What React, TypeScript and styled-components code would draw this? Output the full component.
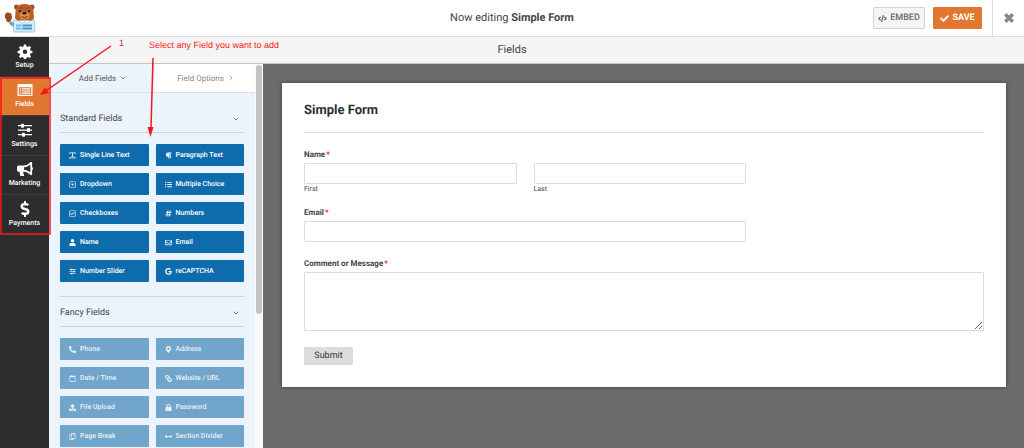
import React from "react";
import styled, { createGlobalStyle, css } from "styled-components";
import {
  FaArrowsAltH,
  FaBullhorn,
  FaCheck,
  FaCode,
  FaDollarSign,
  FaGoogle,
  FaHashtag,
  FaLink,
  FaListUl,
  FaLock,
  FaMapMarkerAlt,
  FaParagraph,
  FaPhoneAlt,
  FaRegCalendar,
  FaRegCaretSquareDown,
  FaRegCheckSquare,
  FaRegCopy,
  FaRegEnvelope,
  FaUpload,
  FaUser,
} from "react-icons/fa";
import { ChevronDown, ChevronRight } from "lucide-react";

const color = {
  orange: "#e27730",
  blue: "#0e6cad",
  panel: "#ebf3fc",
  rail: "#2d2d2d",
  dark: "#6b6b6b",
  text: "#444",
  line: "#c9d4df",
  red: "#f5171b",
};

const GlobalStyle = createGlobalStyle`
  *, *::before, *::after { box-sizing: border-box; }
  body {
    margin: 0;
    font-family: Roboto, "Liberation Sans", sans-serif;
    font-size: 9px;
    color: ${color.text};
    background: ${color.dark};
    text-rendering: geometricPrecision;
  }
  button, input, textarea { font: inherit; color: inherit; margin: 0; text-rendering: inherit; }
  button { cursor: pointer; }
  h1, h2, h3, p { margin: 0; font-weight: 400; }
`;

const Page = styled.div`
  position: relative;
  display: flex;
  flex-direction: column;
  height: 100vh;
  overflow: hidden;
`;

const TopBar = styled.header`
  display: grid;
  grid-template-columns: 1fr auto 1fr;
  align-items: center;
  flex: none;
  height: 37px;
  background: #fff;
  border-bottom: 1px solid #ddd;
`;

const Logo = styled.svg`
  width: 32px;
  height: 29px;
  margin-left: 4px;
`;

const Editing = styled.h1`
  font-size: 11px;
  line-height: 16px;
  strong { font-weight: 700; }
`;

const Actions = styled.div`
  display: flex;
  align-items: center;
  justify-content: flex-end;
  gap: 8px;
  height: 100%;
`;

const ActionButton = styled.button<{ $primary?: boolean }>`
  display: flex;
  align-items: center;
  justify-content: center;
  gap: 3px;
  width: ${(p) => (p.$primary ? 49 : 52)}px;
  height: 22px;
  padding: 0;
  border-radius: 1px;
  border: 1px solid ${(p) => (p.$primary ? color.orange : "#d3d3d3")};
  background: ${(p) => (p.$primary ? color.orange : "#f5f5f5")};
  color: ${(p) => (p.$primary ? "#fff" : "#666")};
  font-weight: ${(p) => (p.$primary ? 700 : 500)};
`;

const CloseButton = styled.button`
  display: grid;
  place-items: center;
  width: 32px;
  height: 100%;
  margin-left: 2px;
  padding: 0;
  border: 0;
  border-left: 1px solid #ddd;
  background: none;
  color: #888;
  font-size: 12px;
`;

const Body = styled.div`
  display: flex;
  flex: 1;
  min-height: 0;
`;

const Rail = styled.nav`
  flex: none;
  width: 49px;
  background: ${color.rail};
`;

const RailList = styled.div`
  display: grid;
  grid-auto-rows: 1fr;
  height: 198px;
`;

const RailItem = styled.button<{ $active?: boolean }>`
  display: flex;
  flex-direction: column;
  align-items: center;
  justify-content: flex-end;
  gap: 1px;
  padding: 0 0 5px;
  border: 0;
  border-bottom: 1px solid #3c3c3c;
  background: ${(p) => (p.$active ? color.orange : "transparent")};
  color: #fff;
  font-size: 7px;
  font-weight: 500;
  line-height: 11px;
  svg { font-size: 16px; }
`;

const Main = styled.main`
  display: flex;
  flex-direction: column;
  flex: 1;
  min-width: 0;
`;

const SectionBar = styled.h2`
  flex: none;
  height: 27px;
  padding-right: 49px;
  border-bottom: 1px solid #c4c4c4;
  background: #f5f5f5;
  font-size: 11px;
  line-height: 26px;
  text-align: center;
`;

const Workspace = styled.div`
  display: flex;
  flex: 1;
  min-height: 0;
`;

const Sidebar = styled.aside`
  flex: none;
  width: 206px;
  overflow: hidden;
  background: ${color.panel};
`;

const ScrollTrack = styled.div`
  flex: none;
  width: 8px;
  padding: 1px 1px 0;
  background: #fafafa;
`;

const ScrollThumb = styled.div`
  height: 249px;
  border-radius: 3px;
  background: #c3c3c3;
`;

const Tabs = styled.div`
  display: grid;
  grid-template-columns: 106px 1fr;
  height: 29px;
`;

const Tab = styled.button<{ $active?: boolean }>`
  display: flex;
  align-items: center;
  justify-content: center;
  gap: 3px;
  padding: 0 0 0 2px;
  border: 0;
  border-bottom: 1px solid ${(p) => (p.$active ? "#dbe4ee" : "#ddd")};
  background: ${(p) => (p.$active ? color.panel : "#fff")};
  color: ${(p) => (p.$active ? "#555" : "#888")};
  font-size: 8px;
`;

const Group = styled.section`
  margin: 0 11px 14px;
  & + & { border-top: 1px solid ${color.line}; }
`;

const GroupHead = styled.h3<{ $tall?: boolean }>`
  display: flex;
  align-items: center;
  justify-content: space-between;
  height: ${(p) => (p.$tall ? 40 : 30)}px;
  padding: ${(p) => (p.$tall ? 12 : 2)}px 4px 0 0;
  border-bottom: 1px solid ${color.line};
  font-size: 9px;
`;

const FieldGrid = styled.div`
  display: grid;
  grid-template-columns: 1fr 1fr;
  gap: 7px;
  padding-top: 11px;
`;

const FieldButton = styled.button<{ $muted?: boolean }>`
  display: flex;
  align-items: center;
  gap: 4px;
  height: 22px;
  padding: 0 9px;
  border: 0;
  border-radius: 1px;
  background: ${(p) => (p.$muted ? "#72a5cc" : color.blue)};
  color: ${(p) => (p.$muted ? "#e6eff7" : "#fff")};
  font-size: 7px;
  font-weight: 500;
  white-space: nowrap;
  svg { flex: none; font-size: 7px; }
`;

const Preview = styled.div`
  flex: 1;
  min-width: 0;
  padding: 19px 18px 0 19px;
  background: ${color.dark};
`;

const FormCard = styled.form`
  padding: 18px 22px 22px;
  background: #fff;
  box-shadow: 0 0 4px rgba(0, 0, 0, 0.4);
`;

const FormTitle = styled.h3`
  height: 32px;
  margin-bottom: 16px;
  border-bottom: 1px solid #ddd;
  color: #2d3034;
  font-size: 13px;
  font-weight: 700;
  line-height: 20px;
`;

const FieldSet = styled.fieldset`
  min-width: 0;
  margin: 0 0 13px;
  padding: 0;
  border: 0;
`;

const Field = styled.div`
  margin-bottom: 16px;
`;

const labelText = css`
  display: block;
  height: 14px;
  padding: 0;
  font-size: 8px;
  font-weight: 700;
  line-height: 12px;
`;

const Legend = styled.legend`${labelText}`;
const Label = styled.label`${labelText}`;

const Star = styled.span`
  margin-left: 1px;
  color: #e0201c;
`;

const Row = styled.div`
  display: grid;
  grid-template-columns: 1fr 1fr;
  gap: 17px;
  width: 65%;
`;

const SubLabel = styled.label`
  display: block;
  font-size: 7px;
  line-height: 10px;
`;

const inputBox = css`
  display: block;
  width: 100%;
  padding: 2px 6px;
  border: 1px solid #ddd;
  border-radius: 1px;
  background: #fff;
`;

const Input = styled.input<{ $medium?: boolean }>`
  ${inputBox}
  width: ${(p) => (p.$medium ? "65%" : "100%")};
  height: 21px;
`;

const TextArea = styled.textarea`
  ${inputBox}
  height: 59px;
`;

const Submit = styled.button`
  display: block;
  width: 49px;
  height: 18px;
  padding: 0;
  border: 1px solid #ddd;
  background: #dcdcdc;
  color: #333;
`;

const Annotations = styled.svg`
  position: absolute;
  top: 0;
  left: 0;
  width: 160px;
  height: 240px;
  pointer-events: none;
`;

const Note = styled.p<{ $left: number; $top: number }>`
  position: absolute;
  left: ${(p) => p.$left}px;
  top: ${(p) => p.$top}px;
  color: ${color.red};
  font-family: "Liberation Sans", Arial, sans-serif;
  line-height: 10px;
  white-space: nowrap;
`;

const Glyph = styled.svg.attrs({ viewBox: "0 0 16 16", fill: "currentColor", "aria-hidden": true })`
  width: 1em;
  height: 1em;
`;

const GearIcon = () => (
  <Glyph>
    <path
      fillRule="evenodd"
      d="M6.900 1.500h2.200l.4 2 1.300.6L12.500 2.900l1.600 1.600-1.200 1.700.5 1.300 2 .4v2.200l-2 .4-.5 1.200 1.200 1.800-1.600 1.500-1.700-1.100-1.300.5-.4 2H6.900l-.4-2-1.300-.5-1.700 1.100-1.600-1.500 1.200-1.800-.5-1.200-2-.4V7.900l2-.4.5-1.300L1.900 4.500l1.600-1.600 1.700 1.200L6.500 3.500zM8 6.600a2.200 2.200 0 1 0 0 4.400 2.200 2.200 0 0 0 0-4.400z"
    />
  </Glyph>
);

const FormIcon = () => (
  <Glyph>
    <path
      fillRule="evenodd"
      d="M1.500 2h13q1 0 1 1v10q0 1-1 1h-13q-1 0-1-1V3q0-1 1-1zm.3 3.300v7.400h12.400V5.300z"
    />
    <path d="M2.800 6.300h1.400v1.200H2.800zM5.200 6.300h8v1.200h-8zM2.800 8.400h1.400v1.200H2.800zM5.200 8.400h8v1.200h-8zM2.800 10.500h1.400v1.200H2.800zM5.200 10.500h8v1.200h-8z" />
  </Glyph>
);

const SlidersIcon = () => (
  <Glyph>
    <path d="M1 3h14v1.300H1zM1 7.500h14v1.300H1zM1 12h14v1.300H1z" />
    <rect x="4" y="1.700" width="3" height="4" rx=".8" />
    <rect x="10" y="6.100" width="3" height="4" rx=".8" />
    <rect x="5" y="10.700" width="3" height="4" rx=".8" />
  </Glyph>
);

const TextWidthIcon = () => (
  <Glyph>
    <path d="M1 1h14v3.500h-1.200L13 2.800H9v7h2V11H5V9.800h2v-7H3l-.8 1.700H1zM0 13.300l2.500-1.800v1.200h11v-1.200l2.500 1.800-2.500 1.900V14h-11v1.200z" />
  </Glyph>
);

const CrossIcon = () => (
  <Glyph>
    <path d="M3 3l10 10M13 3L3 13" stroke="currentColor" strokeWidth="4.600" />
  </Glyph>
);

const ChainIcon = styled(FaLink)`
  transform: scaleX(-1);
`;

const railItems: { label: string; icon: React.ElementType }[] = [
  { label: "Setup", icon: GearIcon },
  { label: "Fields", icon: FormIcon },
  { label: "Settings", icon: SlidersIcon },
  { label: "Marketing", icon: FaBullhorn },
  { label: "Payments", icon: FaDollarSign },
];

const groups: { title: string; muted: boolean; fields: [string, React.ElementType][] }[] = [
  {
    title: "Standard Fields",
    muted: false,
    fields: [
      ["Single Line Text", TextWidthIcon],
      ["Paragraph Text", FaParagraph],
      ["Dropdown", FaRegCaretSquareDown],
      ["Multiple Choice", FaListUl],
      ["Checkboxes", FaRegCheckSquare],
      ["Numbers", FaHashtag],
      ["Name", FaUser],
      ["Email", FaRegEnvelope],
      ["Number Slider", SlidersIcon],
      ["reCAPTCHA", FaGoogle],
    ],
  },
  {
    title: "Fancy Fields",
    muted: true,
    fields: [
      ["Phone", FaPhoneAlt],
      ["Address", FaMapMarkerAlt],
      ["Date / Time", FaRegCalendar],
      ["Website / URL", ChainIcon],
      ["File Upload", FaUpload],
      ["Password", FaLock],
      ["Page Break", FaRegCopy],
      ["Section Divider", FaArrowsAltH],
    ],
  },
];

function BearLogo() {
  return (
    <Logo viewBox="0 0 32 29" aria-label="WPForms" role="img">
      <path d="M9.500 16h20.500l1 10.500q0 1.500-1.500 1.500H11q-1.500 0-1.500-1.500z" fill="#d6ecf7" stroke="#8fc0da" strokeWidth=".8" />
      <circle cx="12.500" cy="3" r="2.500" fill="#a6501f" />
      <circle cx="28" cy="3" r="2.500" fill="#a6501f" />
      <path d="M11.500 8q0-8 9-8t9 8l.5 6q-1.500 3.500-9.500 3.500T11 14z" fill="#b85e26" />
      <path d="M15 4.500q2-2 4 0M22 4.500q2-2 4 0" fill="none" stroke="#8f431c" />
      <ellipse cx="20.500" cy="11.500" rx="5" ry="4" fill="#d98f4e" />
      <ellipse cx="20.500" cy="9.200" rx="2" ry="1.400" fill="#2e1a12" />
      <path d="M17.500 12.500q3 2.500 6 0" fill="none" stroke="#6d3215" />
      <circle cx="16" cy="7" r="1.100" fill="#2e1a12" />
      <circle cx="25" cy="7" r="1.100" fill="#2e1a12" />
      <path d="M15 16.500l3 3 2.500-2 2.500 2 3-3" fill="#fff" stroke="#8fc0da" strokeWidth=".6" />
      <path d="M1 11q0-2 2-2.500 3-.5 4.500 1.500l.5 4q-1 4-4 4.500-2-1-2-3.500-1.500-1-1-4z" fill="#9a4b20" />
      <path d="M6 17l4 2v4l-5-3z" fill="#6aa5c4" />
      <path d="M12 21.500h5.500M12 24.500h5.500" stroke="#6dbbe6" strokeWidth="1.800" />
      <path d="M18.500 21.500h9.500M18.500 24.500h9.500" stroke="#3d97d0" strokeWidth="1.800" />
    </Logo>
  );
}

export default function App() {
  return (
    <>
      <GlobalStyle />
      <Page>
        <TopBar>
          <BearLogo />
          <Editing>
            Now editing <strong>Simple Form</strong>
          </Editing>
          <Actions>
            <ActionButton type="button">
              <FaCode /> EMBED
            </ActionButton>
            <ActionButton type="button" $primary>
              <FaCheck /> SAVE
            </ActionButton>
            <CloseButton type="button" aria-label="Close">
              <CrossIcon />
            </CloseButton>
          </Actions>
        </TopBar>
        <Body>
          <Rail>
            <RailList>
              {railItems.map(({ label, icon: Icon }) => (
                <RailItem key={label} type="button" $active={label === "Fields"}>
                  <Icon />
                  {label}
                </RailItem>
              ))}
            </RailList>
          </Rail>
          <Main>
            <SectionBar>Fields</SectionBar>
            <Workspace>
              <Sidebar>
                <Tabs>
                  <Tab type="button" $active>
                    Add Fields <ChevronDown size={8} />
                  </Tab>
                  <Tab type="button">
                    Field Options <ChevronRight size={8} />
                  </Tab>
                </Tabs>
                {groups.map((group, index) => (
                  <Group key={group.title}>
                    <GroupHead $tall={index === 0}>
                      {group.title} <ChevronDown size={8} />
                    </GroupHead>
                    <FieldGrid>
                      {group.fields.map(([label, Icon]) => (
                        <FieldButton key={label} type="button" $muted={group.muted}>
                          <Icon />
                          {label}
                        </FieldButton>
                      ))}
                    </FieldGrid>
                  </Group>
                ))}
              </Sidebar>
              <ScrollTrack>
                <ScrollThumb />
              </ScrollTrack>
              <Preview>
                <FormCard>
                  <FormTitle>Simple Form</FormTitle>
                  <FieldSet>
                    <Legend>
                      Name<Star>*</Star>
                    </Legend>
                    <Row>
                      <div>
                        <Input id="first" />
                        <SubLabel htmlFor="first">First</SubLabel>
                      </div>
                      <div>
                        <Input id="last" />
                        <SubLabel htmlFor="last">Last</SubLabel>
                      </div>
                    </Row>
                  </FieldSet>
                  <Field>
                    <Label htmlFor="email">
                      Email<Star>*</Star>
                    </Label>
                    <Input id="email" type="email" $medium />
                  </Field>
                  <Field>
                    <Label htmlFor="message">
                      Comment or Message<Star>*</Star>
                    </Label>
                    <TextArea id="message" />
                  </Field>
                  <Submit type="button">Submit</Submit>
                </FormCard>
              </Preview>
            </Workspace>
          </Main>
        </Body>
        <Annotations viewBox="0 0 160 240" aria-hidden="true">
          <g fill="none" stroke={color.red} strokeWidth="1.500">
            <rect x="1" y="78" width="49" height="156" />
            <path d="M111 46L47 90M153 58L151 128" />
          </g>
          <path d="M40 95l5-8 4 6zM150.500 137l-3-10h6z" fill={color.red} />
        </Annotations>
        <Note $left={119} $top={38}>1</Note>
        <Note $left={149} $top={40}>Select any Field you want to add</Note>
      </Page>
    </>
  );
}
